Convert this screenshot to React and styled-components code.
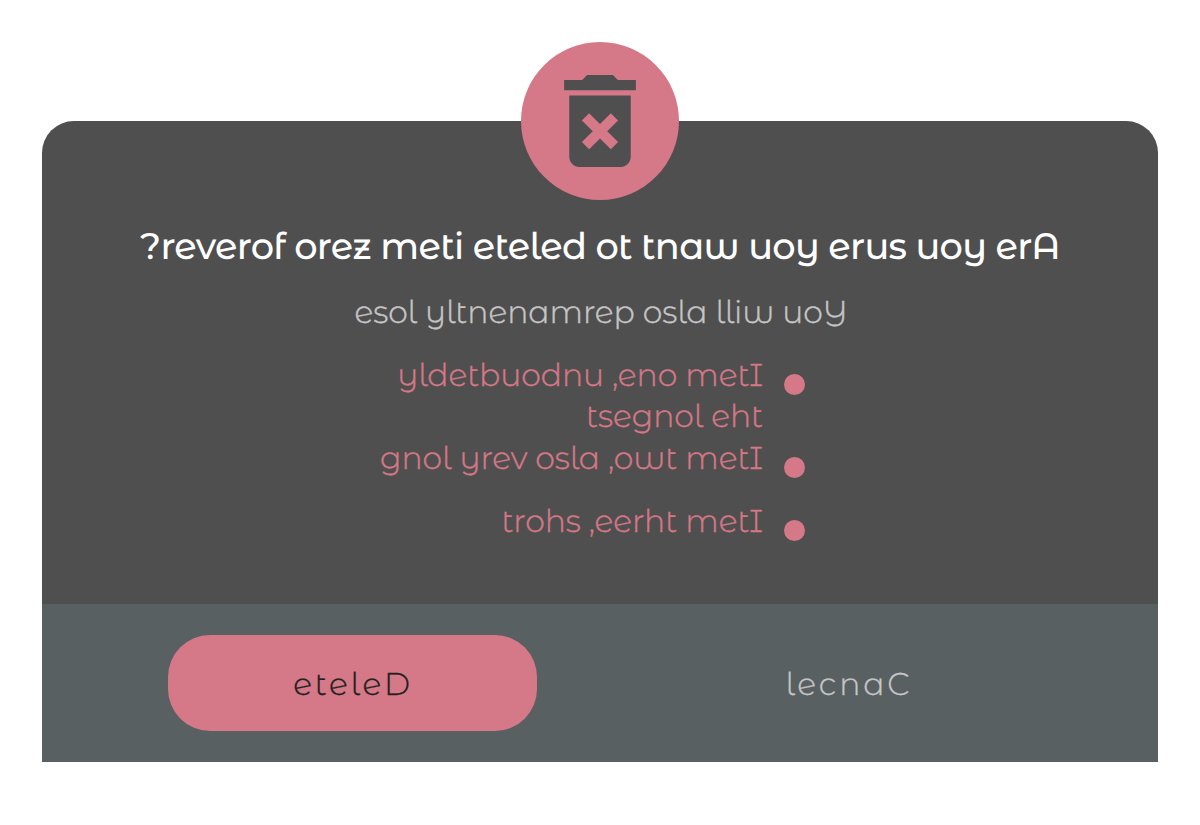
import React from 'react';
import styled, { createGlobalStyle } from 'styled-components';

const GlobalStyle = createGlobalStyle`
  * { box-sizing: border-box; }
  body { margin: 0; background: #fff; }
`;

const Page = styled.main`
  width: 1200px;
  height: 825px;
  padding: 42px;
  overflow: hidden;
  font-family: 'Montserrat Alternates', Inter, 'Liberation Sans', sans-serif;
  font-weight: 300;
  text-rendering: geometricPrecision;
  white-space: nowrap;
`;

const Dialog = styled.section`
  display: flex;
  flex-direction: column;
  align-items: center;
  margin-top: 79px;
  height: 641px;
  background: #4f4f4f;
  border-radius: 32px 32px 0 0;
`;

const Badge = styled.div`
  display: flex;
  align-items: center;
  justify-content: center;
  flex: none;
  width: 158px;
  height: 158px;
  margin-top: -79px;
  border-radius: 50%;
  background: #d57887;
  color: #4f4f4f;

  svg {
    display: block;
    width: 124px;
    height: 124px;
  }
`;

const Title = styled.h1`
  margin: 22px 0 0;
  height: 50px;
  line-height: 50px;
  font-size: 36.75px;
  font-weight: 500;
  letter-spacing: -0.72px;
  color: #fff;
`;

const Message = styled.p`
  margin: 16px 0 0;
  padding-left: 2px;
  height: 48px;
  line-height: 48px;
  font-size: 31.5px;
  letter-spacing: -0.07px;
  color: #c6c6c6;
  -webkit-text-stroke: 0.4px currentColor;
`;

const Items = styled.ul`
  align-self: flex-start;
  width: 425px;
  margin: 19px 0 0 338px;
  padding: 0;
  list-style: none;
  color: #d57887;
`;

const Item = styled.li`
  display: flex;
  justify-content: flex-end;
  gap: 21px;
  min-height: 63px;
  font-size: 31.5px;
  line-height: 41px;
  letter-spacing: -0.07px;
  -webkit-text-stroke: 0.4px currentColor;
`;

const Lines = styled.div`
  display: flex;
  flex-direction: column;
  align-items: flex-end;
  padding-bottom: 1px;
`;

const Bullet = styled.span`
  flex: none;
  width: 21px;
  height: 21px;
  margin-top: 19px;
  border-radius: 50%;
  background: currentColor;
`;

const Footer = styled.footer`
  display: flex;
  align-items: center;
  align-self: stretch;
  gap: 127px;
  height: 158px;
  margin-top: auto;
  padding-left: 126px;
  background: #596061;
`;

const Button = styled.button`
  width: 369px;
  height: 96px;
  padding: 1px 0 0 1px;
  border: 0;
  border-radius: 42px;
  font: inherit;
  font-size: 31.5px;
  letter-spacing: 2.8px;
  text-rendering: inherit;
  -webkit-text-stroke: 0.3px currentColor;
  color: ${(p) => (p.$primary ? '#202020' : '#c6c6c6')};
  background: ${(p) => (p.$primary ? '#d57887' : 'transparent')};
`;

const items = [
  ['yldetbuodnu ,eno metI', 'tsegnol eht'],
  ['gnol yrev osla ,owt metI'],
  ['trohs ,eerht metI'],
];

export default function App() {
  return (
    <Page>
      <GlobalStyle />
      <Dialog>
        <Badge>
          <svg viewBox="-0.1 -0.1 24.2 24.2" fill="currentColor" aria-hidden="true">
            <path d="M6 19c0 1.1.9 2 2 2h8c1.1 0 2-.9 2-2V7H6v12zm2.46-7.12 1.41-1.41L12 12.59l2.12-2.12 1.41 1.41L13.41 14l2.12 2.12-1.41 1.41L12 15.41l-2.12 2.12-1.41-1.41L10.59 14l-2.13-2.12zM15.5 4l-1-1h-5l-1 1H5v2h14V4z" />
          </svg>
        </Badge>
        <Title>?reverof orez meti eteled ot tnaw uoy erus uoy erA</Title>
        <Message>esol yltnenamrep osla lliw uoY</Message>
        <Items>
          {items.map((lines) => (
            <Item key={lines[0]}>
              <Lines>
                {lines.map((text) => <span key={text}>{text}</span>)}
              </Lines>
              <Bullet />
            </Item>
          ))}
        </Items>
        <Footer>
          <Button $primary>eteleD</Button>
          <Button>lecnaC</Button>
        </Footer>
      </Dialog>
    </Page>
  );
}
